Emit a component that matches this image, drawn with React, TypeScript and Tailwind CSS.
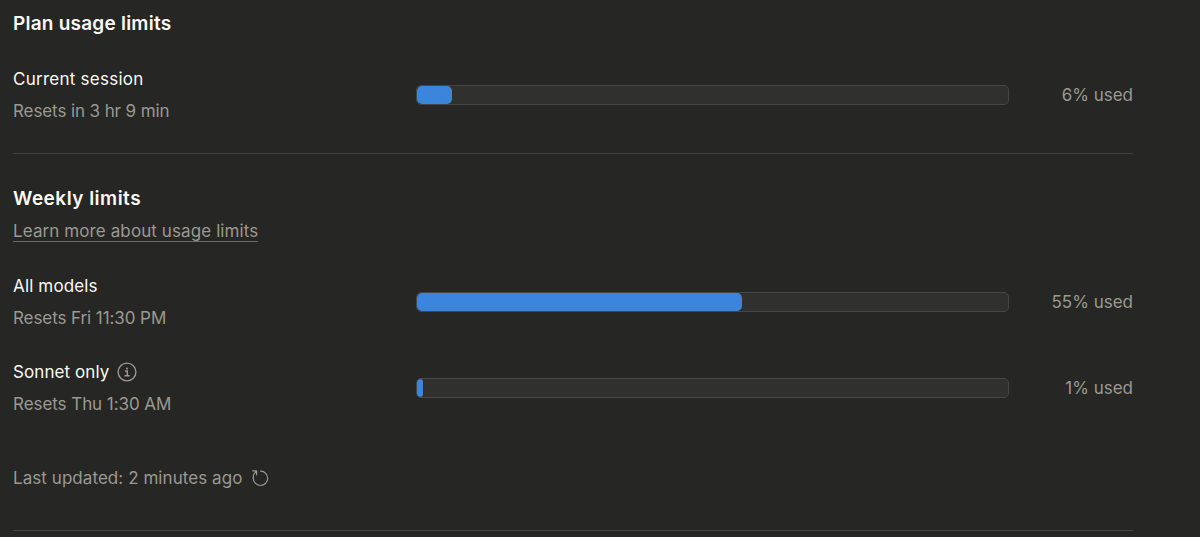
import type { ReactNode } from "react";

interface UsageRowProps {
  label: string;
  labelClass: string;
  resets: string;
  resetsClass: string;
  percent: number;
  icon?: ReactNode;
}

function InfoIcon() {
  return (
    <svg
      className="mb-0.5 h-5 w-5 text-[#9b9992]"
      viewBox="0 0 20 20"
      fill="none"
      stroke="currentColor"
      strokeWidth="1.4"
    >
      <circle cx="10" cy="10" r="8.9" />
      <path d="M8 9h2.3v4.6M7.5 13.7h5.2" />
      <circle cx="10" cy="6.5" r="1" fill="currentColor" stroke="none" />
    </svg>
  );
}

function RefreshIcon() {
  return (
    <svg
      className="mb-0.5 h-[18px] w-[18px]"
      viewBox="0 0 18 18"
      fill="none"
      stroke="currentColor"
      strokeWidth="1.2"
      strokeLinecap="round"
      strokeLinejoin="round"
    >
      <path d="M9.6 2.1a7.2 7.2 0 1 1-7.3 6.9" />
      <path d="M1.7 1.9h3.9v3.9M5.4 2.2a8 8 0 0 0-3.1 6.8" />
    </svg>
  );
}

function UsageRow({ label, labelClass, resets, resetsClass, percent, icon }: UsageRowProps) {
  return (
    <div className="flex h-16 items-center">
      <div className="mt-0.5 w-[403px]">
        <div className="flex h-8 items-center gap-2 text-[#faf9f5]">
          <span className={labelClass}>{label}</span>
          {icon}
        </div>
        <div className="flex h-8 items-center text-[#9b9992]">
          <span className={resetsClass}>{resets}</span>
        </div>
      </div>
      <div className="h-5 w-[593px] overflow-hidden rounded-[5px] border border-[#464644] bg-[#30302e]">
        <div
          className="h-full rounded-[5px] bg-[#3b86dc]"
          style={{ width: `${percent}%` }}
        />
      </div>
      <p className="mt-0.5 flex-1 text-right text-[#9b9992]">{percent}% used</p>
    </div>
  );
}

export default function App() {
  return (
    <div className="h-[537px] overflow-hidden bg-[#262624] pl-[13px] pt-2.5 font-['Inter',sans-serif] text-[17px]">
      <div className="w-[1120px]">
        {/* Current session */}
        <section className="h-[144px] border-b border-[#3e3e3b]">
          <h2 className="mb-[25px] text-[19px] leading-7 font-semibold text-[#faf9f5]">
            <span className="tracking-[0.23px]">Plan usage limits</span>
          </h2>
          <UsageRow
            label="Current session"
            labelClass="tracking-[0.25px]"
            resets="Resets in 3 hr 9 min"
            resetsClass="tracking-[-0.1px]"
            percent={6}
          />
        </section>

        {/* Weekly limits */}
        <section className="h-[377px] border-b border-[#464644] pt-[31px]">
          <h2 className="text-[19px] leading-7 font-semibold text-[#faf9f5]">
            <span className="tracking-[0.48px]">Weekly limits</span>
          </h2>
          <div className="mt-1.5 mb-7 flex">
            <a className="h-[23px] border-b border-[#6b6a65] leading-6 tracking-[0.1px] text-[#9b9992]">
              Learn more about usage limits
            </a>
          </div>
          <div className="flex flex-col gap-[22px]">
            <UsageRow
              label="All models"
              labelClass="tracking-[0.15px]"
              resets="Resets Fri 11:30 PM"
              resetsClass="tracking-[-0.08px]"
              percent={55}
            />
            <UsageRow
              label="Sonnet only"
              labelClass="tracking-[0.09px]"
              resets="Resets Thu 1:30 AM"
              resetsClass="tracking-[-0.06px]"
              percent={1}
              icon={<InfoIcon />}
            />
          </div>
          <div className="mt-[43px] flex h-8 items-center gap-[9px] text-[#9b9992]">
            <span className="tracking-[0.06px]">Last updated: 2 minutes ago</span>
            <RefreshIcon />
          </div>
        </section>
      </div>
    </div>
  );
}
